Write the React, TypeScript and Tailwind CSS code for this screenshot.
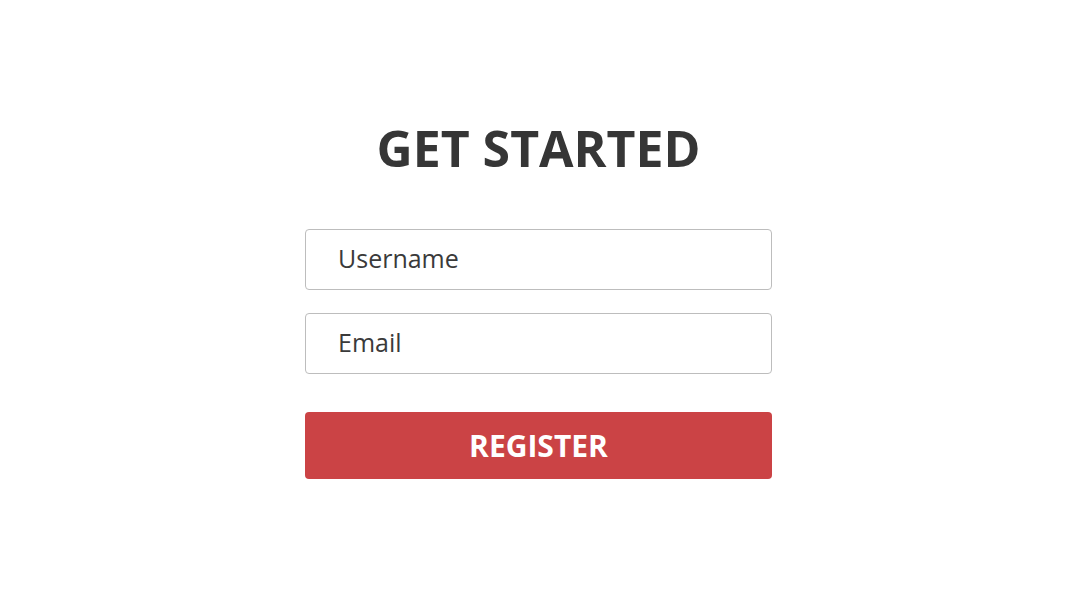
import React from "react";

export default function App() {
  return (
    <div className="w-[1077px] h-[612px] bg-white flex flex-col items-center" style={{ fontFamily: '"Open Sans", sans-serif' }}>
      <h1 className="mt-[114px] text-[50px] leading-[68px] font-bold text-[#363636]">GET STARTED</h1>
      <form className="mt-[47px] w-[467px] flex flex-col" onSubmit={(e) => e.preventDefault()}>
        <input
          type="text"
          placeholder="Username"
          className="h-[61px] w-full border border-[#bdbdbd] rounded-[4px] pl-[32px] pb-[4px] text-[25px] text-[#333] placeholder:text-[#3a3a3a] outline-none"
        />
        <input
          type="email"
          placeholder="Email"
          className="mt-[23px] h-[61px] w-full border border-[#bdbdbd] rounded-[4px] pl-[32px] pb-[4px] text-[25px] text-[#333] placeholder:text-[#3a3a3a] outline-none"
        />
        <button
          type="submit"
          className="mt-[38px] h-[67px] w-full bg-[#cb4345] rounded-[4px] text-white text-[30px] font-bold"
        >
          REGISTER
        </button>
      </form>
    </div>
  );
}
